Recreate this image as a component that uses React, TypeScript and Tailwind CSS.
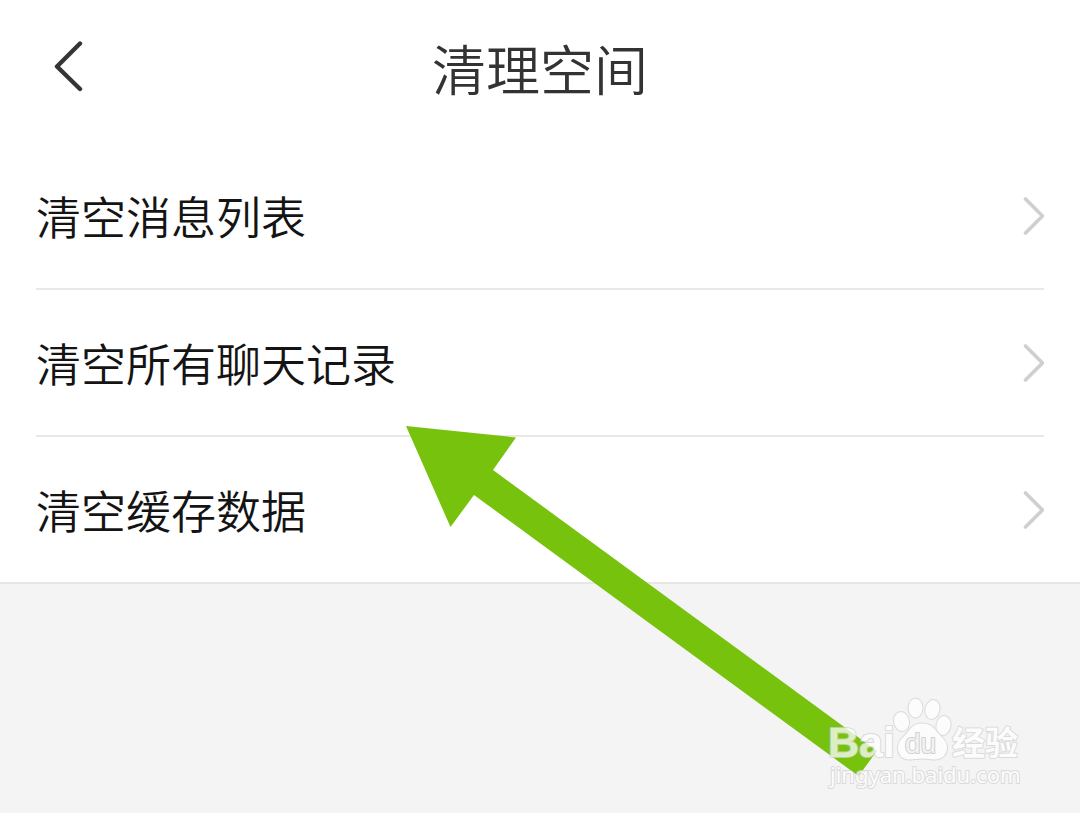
const items = ["清空消息列表", "清空所有聊天记录", "清空缓存数据"];

function BackIcon() {
  return (
    <svg width="30" height="52" viewBox="0 0 30 52" fill="none" aria-hidden="true">
      <path d="M27 3.5 4 26.5 27 49" stroke="#353535" strokeWidth="4.4" strokeLinecap="round" strokeLinejoin="round" />
    </svg>
  );
}

function ChevronIcon() {
  return (
    <svg width="21" height="40" viewBox="0 0 21 40" fill="none" aria-hidden="true">
      <path d="M2.500 3 19.500 20 2.500 37" stroke="#cfcfcf" strokeWidth="3.6" strokeLinecap="round" />
    </svg>
  );
}

function Arrow() {
  return (
    <svg
      className="pointer-events-none absolute left-[406px] top-[426px]"
      width="472"
      height="351"
      viewBox="406 426 472 351"
      aria-hidden="true"
    >
      <path d="M406 426 516 437.500 493 470 877 751 858.500 776 474 495 450.500 527Z" fill="#76c20c" />
    </svg>
  );
}

function Watermark() {
  return (
    <svg
      className="pointer-events-none absolute left-[820px] top-[690px]"
      width="210"
      height="106"
      viewBox="820 690 210 106"
      role="img"
      aria-label="Baidu 经验"
    >
      <g opacity="0.75" fill="#ffffff" stroke="#d2d2d2" strokeWidth="2" paintOrder="stroke" strokeLinejoin="round">
        <text x="828" y="757" fontSize="43" fontWeight="700" fontFamily="'Liberation Sans', sans-serif">
          Bai
        </text>
        <ellipse cx="901.500" cy="721.500" rx="7.500" ry="9.500" transform="rotate(-12 901.500 721.500)" />
        <ellipse cx="915.500" cy="708" rx="7" ry="9.500" />
        <ellipse cx="932.500" cy="709.500" rx="7" ry="9.500" transform="rotate(12 932.500 709.500)" />
        <ellipse cx="943.500" cy="725.500" rx="7" ry="9.500" transform="rotate(10 943.500 725.500)" />
        <path d="M922 723.500c-7 0-10 3-13 7-4 6-11 9-11 17 0 7 4 12 11 12 5 0 8-1 13-1s8 1 13 1c7 0 12-5 12-12 0-8-7-11-11-17-3-4-7-7-14-7Z" />
        <text x="905" y="753" fontSize="28" fontFamily="'Liberation Sans', sans-serif" fill="#f2f2f2" stroke="#c4c4c4">
          du
        </text>
        <text x="952" y="755" fontSize="33" fontWeight="700" fontFamily="'Noto Sans CJK SC', sans-serif">
          经验
        </text>
        <text x="830" y="783" fontSize="22" fontFamily="'Noto Sans', sans-serif">
          jingyan.baidu.com
        </text>
      </g>
    </svg>
  );
}

export default function App() {
  return (
    <div className="relative min-h-screen overflow-hidden bg-[#f4f4f4] font-['Noto_Sans_CJK_SC',sans-serif]">
      <main className="border-b-2 border-[#e6e6e6] bg-white">
        <header className="grid h-[143px] grid-cols-[1fr_auto_1fr] items-start pt-9">
          <button type="button" aria-label="返回" className="ml-[53px] mt-1 w-fit">
            <BackIcon />
          </button>
          <h1 className="text-[54px] leading-[64px] font-[350] text-[#333333]">清理空间</h1>
        </header>
        <ul className="divide-y-2 divide-[#e8e8e8] px-9">
          {items.map((label) => (
            <li key={label}>
              <button type="button" className="flex h-[145px] w-full items-center justify-between text-left">
                <span className="text-[45px] leading-[60px] font-[350] text-[#141414]">{label}</span>
                <ChevronIcon />
              </button>
            </li>
          ))}
        </ul>
      </main>
      <Arrow />
      <Watermark />
    </div>
  );
}
